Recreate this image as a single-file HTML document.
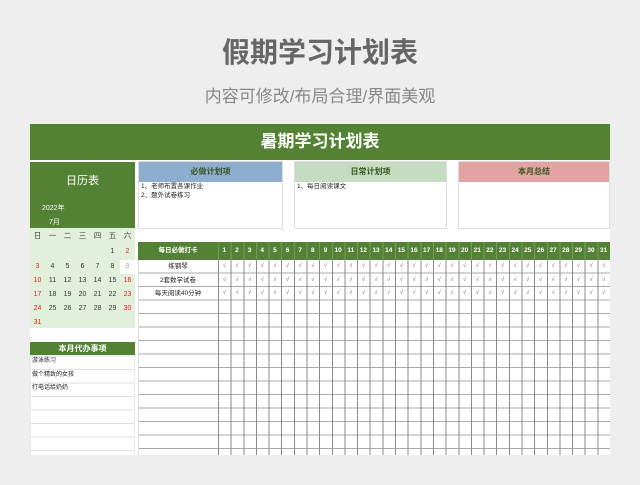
<!DOCTYPE html>
<html><head><meta charset="utf-8"><style>
*{margin:0;padding:0;box-sizing:border-box}
body{width:640px;height:485px;background:#eeeeee;position:relative;overflow:hidden;font-family:"Liberation Sans","Noto Sans CJK SC",sans-serif}
.a{position:absolute}
#t1{left:0;width:640px;top:36px;font-size:28px;font-weight:bold;color:#666;text-align:center;line-height:34px}
#t2{left:0;width:640px;top:86px;font-size:17px;color:#888;text-align:center;line-height:22px}
#sheet{left:30px;top:124px;width:580px;height:331px;background:#fff}
#hdr{left:30px;top:124px;width:580px;height:36px;background:#548235;color:#fff;font-size:17px;font-weight:bold;text-align:center;line-height:36px}
#cal{left:30px;top:162px;width:105px;height:66px;background:#548235;color:#fff}
#calg{left:30px;top:228px;width:105px;height:100px;background:#e2efda}
.cd{position:absolute;width:15px;text-align:center;font-size:7px;color:#333;line-height:14px}
.r{color:#e02020}
.box{position:absolute;top:161px;height:68px;border:1px solid #ddd;background:#fff}
.bh{height:20px;font-size:8px;color:#375623;font-weight:bold;text-align:center;line-height:20px}
.bt{font-size:6.5px;color:#222;padding-left:2px;line-height:9px}
#grid{left:138px;top:260px;width:472px;height:195px;
background:repeating-linear-gradient(to bottom,transparent 0,transparent 12.5px,#aaa 12.5px,#aaa 13.5px),#fff}
#vg{left:218px;top:260px;width:392px;height:195px;
background:repeating-linear-gradient(to right,#8a8a8a 0,#8a8a8a 1px,transparent 1px,transparent 12.645px)}
#th{left:138px;top:242px;width:472px;height:18px;background:#548235}
#thv{left:218px;top:242px;width:392px;height:18px;
background:repeating-linear-gradient(to right,#7a9a62 0,#7a9a62 1px,transparent 1px,transparent 12.645px)}
.hn{position:absolute;top:242px;width:12.645px;text-align:center;color:#fff;font-size:6.5px;font-weight:bold;line-height:18px}
.ck{position:absolute;width:12.645px;text-align:center;color:#555;font-size:5.5px;line-height:13.5px}
.rl{position:absolute;left:138px;width:80px;text-align:center;font-size:6.5px;color:#222;line-height:13.5px}
#todo{left:30px;top:342px;width:105px;height:113px;
background:repeating-linear-gradient(to bottom,#e0e0e0 0,#e0e0e0 1px,transparent 1px,transparent 13.5px);border-left:1px solid #e8e8e8;border-right:1px solid #e8e8e8}
#todoh{left:30px;top:342px;width:105px;height:13px;background:#548235;color:#fff;font-size:8px;font-weight:bold;text-align:center;line-height:13px}
.td{position:absolute;left:32px;font-size:6px;color:#222;line-height:13.5px}
</style></head><body>
<div class="a" id="t1">假期学习计划表</div>
<div class="a" id="t2">内容可修改/布局合理/界面美观</div>
<div class="a" id="sheet"></div>
<div class="a" id="hdr">暑期学习计划表</div>
<div class="a" id="cal">
<div class="a" style="left:0;width:105px;top:12px;font-size:11px;text-align:center;line-height:14px">日历表</div>
<div class="a" style="left:12px;top:41px;font-size:7px">2022年</div>
<div class="a" style="left:19px;top:55px;font-size:7px">7月</div>
</div>
<div class="a" id="calg"></div>
<div class="a" style="left:120px;top:260px;width:15px;height:14px;background:#fff"></div>
<div id="calc"></div>
<div class="box" style="left:138px;width:145px"><div class="bh" style="background:#8eaed0">必做计划项</div><div class="bt">1、老师布置各课作业<br>2、题外试卷练习</div></div>
<div class="box" style="left:294px;width:153px"><div class="bh" style="background:#c4dcc0">日常计划项</div><div class="bt">1、每日阅读课文</div></div>
<div class="box" style="left:458px;width:152px"><div class="bh" style="background:#e3a3a3">本月总结</div></div>
<div class="a" id="grid"></div>
<div class="a" style="left:138px;top:260px;width:1px;height:195px;background:#ddd"></div>
<div class="a" id="th"></div>
<div class="a" id="thv"></div>
<div class="a" id="vg"></div>
<div class="a" style="left:138px;top:242px;width:80px;font-size:6.5px;color:#fff;font-weight:bold;text-align:center;line-height:18px">每日必做打卡</div>
<div id="hn"></div>
<div class="rl" style="top:260px">练钢琴</div>
<div class="rl" style="top:273.5px">2套数学试卷</div>
<div class="rl" style="top:287px">每天阅读40分钟</div>
<div id="cks"></div>
<div class="a" id="todo"></div>
<div class="a" id="todoh">本月代办事项</div>
<div class="td" style="top:355px">游泳练习</div>
<div class="td" style="top:368.5px">做个精致的女孩</div>
<div class="td" style="top:382px">打电话给奶奶</div>
<script>
var h='';
for(var i=0;i<31;i++){h+='<div class="hn" style="left:'+(218+i*12.645)+'px">'+(i+1)+'</div>';}
document.getElementById('hn').innerHTML=h;
var c='';
for(var r=0;r<3;r++)for(var i=0;i<31;i++){c+='<div class="ck" style="left:'+(218+i*12.645)+'px;top:'+(260+r*13.5)+'px">√</div>';}
document.getElementById('cks').innerHTML=c;
var w=['日','一','二','三','四','五','六'],k='';
for(var i=0;i<7;i++)k+='<div class="cd" style="left:'+(30+i*15)+'px;top:229px;font-size:7.5px;color:#444">'+w[i]+'</div>';
var rows=[245,260,274,288,302,316];
for(var d=1;d<=31;d++){var p=d+4,row=Math.floor(p/7),col=p%7;
var red=(col==0||col==6)&&d!=9;
k+='<div class="cd'+(red?' r':'')+'" style="left:'+(30+col*15)+'px;top:'+rows[row]+'px'+(d==9?';color:#aaa':'')+'">'+d+'</div>';}
document.getElementById('calc').innerHTML=k;
</script>
</body></html>
